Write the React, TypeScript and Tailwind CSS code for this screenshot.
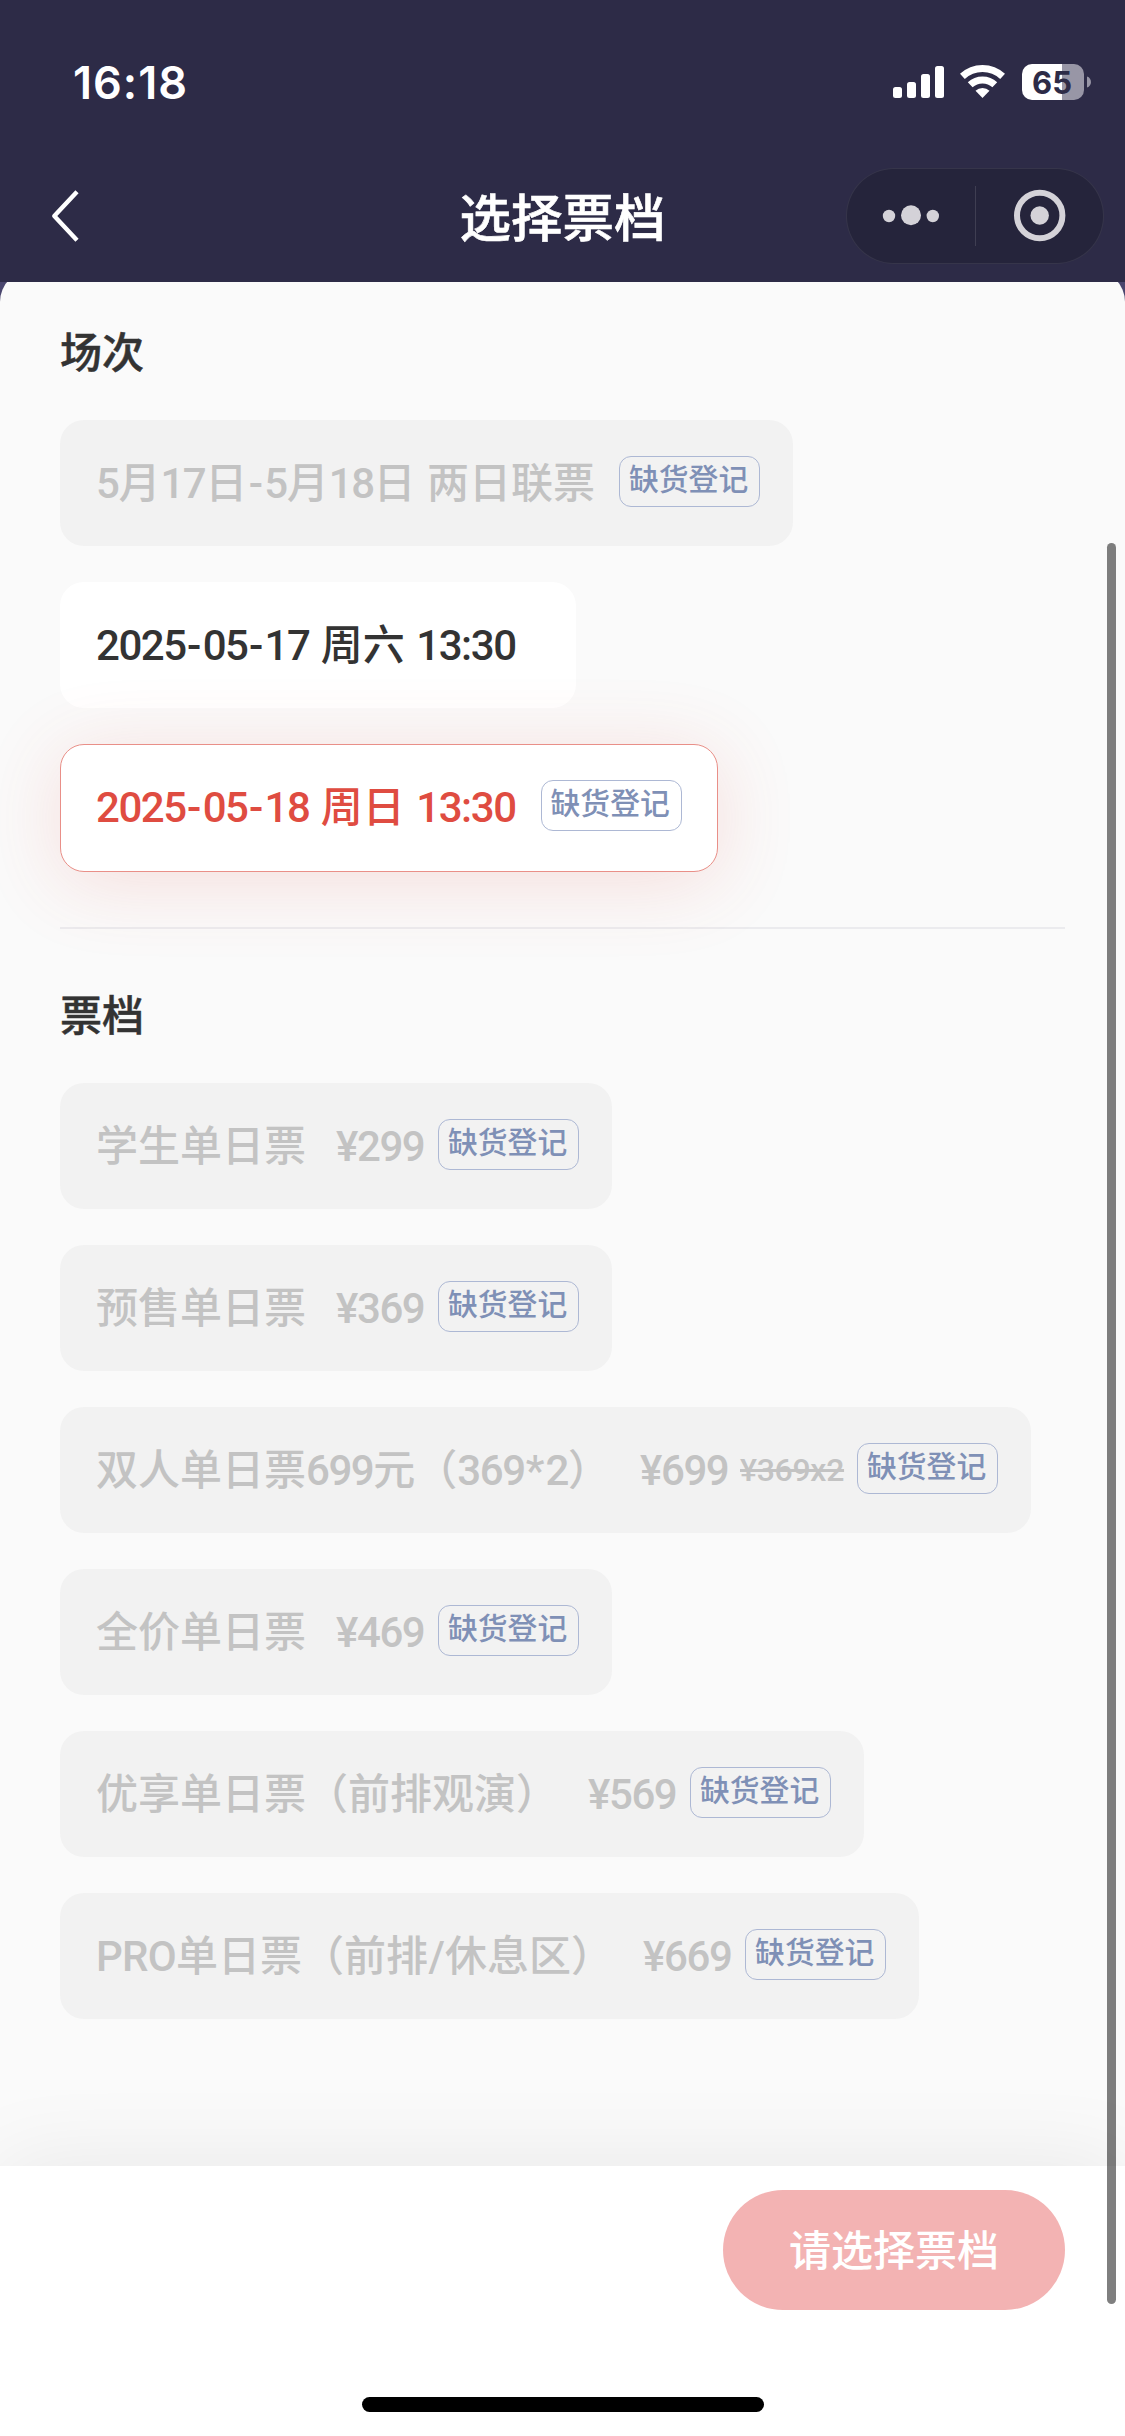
import { Fragment } from 'react'
import clsx from 'clsx'

interface Session {
  id: number
  label: string
  soldOut: boolean
  selected?: boolean
  disabled?: boolean
}

interface Ticket {
  id: number
  name: string
  price: string
  original?: string
}

const sessions: Session[] = [
  { id: 1, label: '5月17日-5月18日 两日联票', soldOut: true, disabled: true },
  { id: 2, label: '2025-05-17 周六 13:30', soldOut: false },
  { id: 3, label: '2025-05-18 周日 13:30', soldOut: true, selected: true },
]

const tickets: Ticket[] = [
  { id: 1, name: '学生单日票', price: '¥299' },
  { id: 2, name: '预售单日票', price: '¥369' },
  { id: 3, name: '双人单日票699元（369*2）', price: '¥699', original: '¥369x2' },
  { id: 4, name: '全价单日票', price: '¥469' },
  { id: 5, name: '优享单日票（前排观演）', price: '¥569' },
  { id: 6, name: 'PRO单日票（前排/休息区）', price: '¥669' },
]

// Digits are set tighter than the Chinese text, dashes and slashes get their own cell
function MixedText({ text }: { text: string }) {
  const parts = text.split(/([-/*]|[\dA-Z:]+)/).filter(Boolean)
  return (
    <>
      {parts.map((part, i) => {
        if (part === '*') {
          return <span key={i} className="inline-block w-[21px] text-center">{part}</span>
        }
        if (/^[-/]$/.test(part)) {
          return <span key={i} className="inline-block w-[17px] text-center">{part}</span>
        }
        if (/^[A-Z]+$/.test(part)) {
          return <span key={i} className="tracking-[-0.7px]">{part}</span>
        }
        if (/^[\d:]+$/.test(part)) {
          return <span key={i} className="tracking-[-1.45px]">{part}</span>
        }
        return <Fragment key={i}>{part}</Fragment>
      })}
    </>
  )
}

function SoldOutTag() {
  return (
    <span className="flex h-[51px] w-[141px] shrink-0 rounded-xl border border-[#adb8d4] pl-[9px] text-[29.8px] font-medium leading-[45px] text-[#7f90b6]">
      缺货登记
    </span>
  )
}

function SectionTitle({ children }: { children: string }) {
  return (
    <h2 className="text-[42px] font-medium leading-[60px] text-[#333] [-webkit-text-stroke:0.5px_#333]">{children}</h2>
  )
}

function StatusBar() {
  return (
    <div className="flex h-[150px] items-start justify-between pl-[73px] pr-[34px] pt-[64px] text-white">
      <span className="font-[Inter] text-[45px] font-semibold leading-[37px] tracking-[1px]">16:18</span>
      <div className="flex">
        <svg width="51" height="36" viewBox="0 0 51 36" fill="currentColor">
          <rect x="0" y="23" width="9" height="11" rx="2.5" />
          <rect x="14" y="18" width="9" height="16" rx="2.5" />
          <rect x="28" y="10" width="9" height="24" rx="2.5" />
          <rect x="42" y="2" width="9" height="32" rx="2.5" />
        </svg>
        <svg width="45" height="36" viewBox="0 -1 45 36" className="ml-4" fill="none" stroke="currentColor" strokeWidth="7">
          <path d="M2.4 11.4A29.5 29.5 0 0 1 42.6 11.4" />
          <path d="M10.2 19.8A18 18 0 0 1 34.8 19.8" />
          <path d="M22.5 33L15.5 25.7A10.3 10.3 0 0 1 29.5 25.7Z" fill="currentColor" stroke="none" />
        </svg>
        <div className="ml-[17px] flex h-9 w-[62px] items-center justify-center rounded-[10px] bg-linear-to-r from-white from-65% to-[#9896a6] to-65% pr-0.5 font-[Inter] text-[31px] font-bold leading-none text-[#2d2b47]">
          65
        </div>
        <svg width="4" height="36" viewBox="0 0 4 36" className="ml-[3px]" fill="#9896a6">
          <path d="M0 12.5C5.3 14 5.3 22 0 23.5Z" />
        </svg>
      </div>
    </div>
  )
}

function NavBar() {
  return (
    <div className="grid h-[132px] grid-cols-[1fr_auto_1fr] items-center text-white">
      <svg width="30" height="54" viewBox="0 0 30 54" className="ml-[49px]" fill="none" stroke="currentColor" strokeWidth="4.4" strokeLinejoin="round">
        <path d="M28 2.8L5.3 27L28 51.2" />
      </svg>
      <h1 className="pt-2 text-[51.5px] font-medium leading-[60px] [-webkit-text-stroke:0.6px_#fff]">选择票档</h1>
      <div className="mr-[21px] flex h-24 w-[258px] items-center justify-self-end rounded-full border border-white/8 bg-[#25243b]">
        <svg width="128" height="60" viewBox="0 0 128 60" fill="#d4d2d8">
          <circle cx="42" cy="30" r="6.2" />
          <circle cx="64" cy="29.2" r="10" />
          <circle cx="85.8" cy="30" r="6.2" />
        </svg>
        <div className="h-[60px] w-px bg-white/12" />
        <svg width="127" height="60" viewBox="0 0 127 60" fill="none">
          <circle cx="63.7" cy="29.5" r="22.7" stroke="#d4d2d8" strokeWidth="6" />
          <circle cx="63.7" cy="29.5" r="9.2" fill="#d4d2d8" />
        </svg>
      </div>
    </div>
  )
}

function SessionCard({ session }: { session: Session }) {
  return (
    <div
      className={clsx(
        'flex items-start rounded-3xl text-[42px]',
        session.selected
          ? 'h-32 border border-[#e98f88] bg-white px-[35px] pt-[35px] text-[#df4c41] shadow-[0_10px_80px_rgba(223,76,65,0.16)]'
          : 'h-[126px] pl-9 pt-9',
        session.disabled && 'bg-[#f2f2f2] pr-[33px] text-[#c3c3c3]',
        !session.selected && !session.disabled && 'bg-white pr-[60px] text-[#333]',
      )}
    >
      <span className="whitespace-nowrap font-medium leading-[56px] [word-spacing:1px]">
        <MixedText text={session.label} />
      </span>
      {session.soldOut && (
        <div className={session.selected ? 'ml-[25px]' : 'ml-6'}>
          <SoldOutTag />
        </div>
      )}
    </div>
  )
}

function TicketCard({ ticket }: { ticket: Ticket }) {
  return (
    <div className="flex h-[126px] items-start rounded-3xl bg-[#f2f2f2] pl-9 pr-[33px] pt-9 text-[42px] font-medium leading-[56px] text-[#c3c3c3]">
      <span className="whitespace-nowrap">
        <MixedText text={ticket.name} />
      </span>
      <span className="ml-[30px] w-[90px] whitespace-nowrap tracking-[-1.4px]">{ticket.price}</span>
      {ticket.original && (
        <span className="ml-2.5 w-[105px] whitespace-nowrap text-[32px] leading-[54px] tracking-[-0.3px] line-through">{ticket.original}</span>
      )}
      <div className="ml-3">
        <SoldOutTag />
      </div>
    </div>
  )
}

export default function App() {
  return (
    <div className="relative flex h-[2436px] w-[1125px] flex-col overflow-hidden bg-[#4a466e] font-[Roboto,'Noto_Sans_CJK_SC',sans-serif]">
      <header className="relative z-10 h-[282px] shrink-0 bg-[#2d2b47]">
        <StatusBar />
        <NavBar />
      </header>

      <main className="-mt-3 flex-1 rounded-t-[32px] bg-[#fafafa] px-[60px] pt-[54px]">
        {/* 场次 */}
        <SectionTitle>场次</SectionTitle>
        <div className="mt-9 flex flex-col items-start gap-9">
          {sessions.map((s) => (
            <SessionCard key={s.id} session={s} />
          ))}
        </div>

        <div className="mt-[55px] h-0.5 bg-[#ebebee]" />

        {/* 票档 */}
        <div className="mt-[58px]">
          <SectionTitle>票档</SectionTitle>
        </div>
        <div className="mt-9 flex flex-col items-start gap-9">
          {tickets.map((t) => (
            <TicketCard key={t.id} ticket={t} />
          ))}
        </div>
      </main>

      <footer className="flex h-[270px] shrink-0 flex-col items-center justify-between bg-white pb-6 pt-6 shadow-[0_0_90px_rgba(0,0,0,0.08)]">
        <button className="mr-[60px] h-[120px] w-[342px] self-end rounded-full bg-[#f3b3b3] pt-0.5 text-[42px] font-medium text-white">
          请选择票档
        </button>
        <div className="h-[15px] w-[402px] rounded-full bg-black" />
      </footer>

      {/* scroll indicator */}
      <div className="absolute right-[9px] top-[543px] h-[1761px] w-[9px] rounded-full bg-black/50" />
    </div>
  )
}
